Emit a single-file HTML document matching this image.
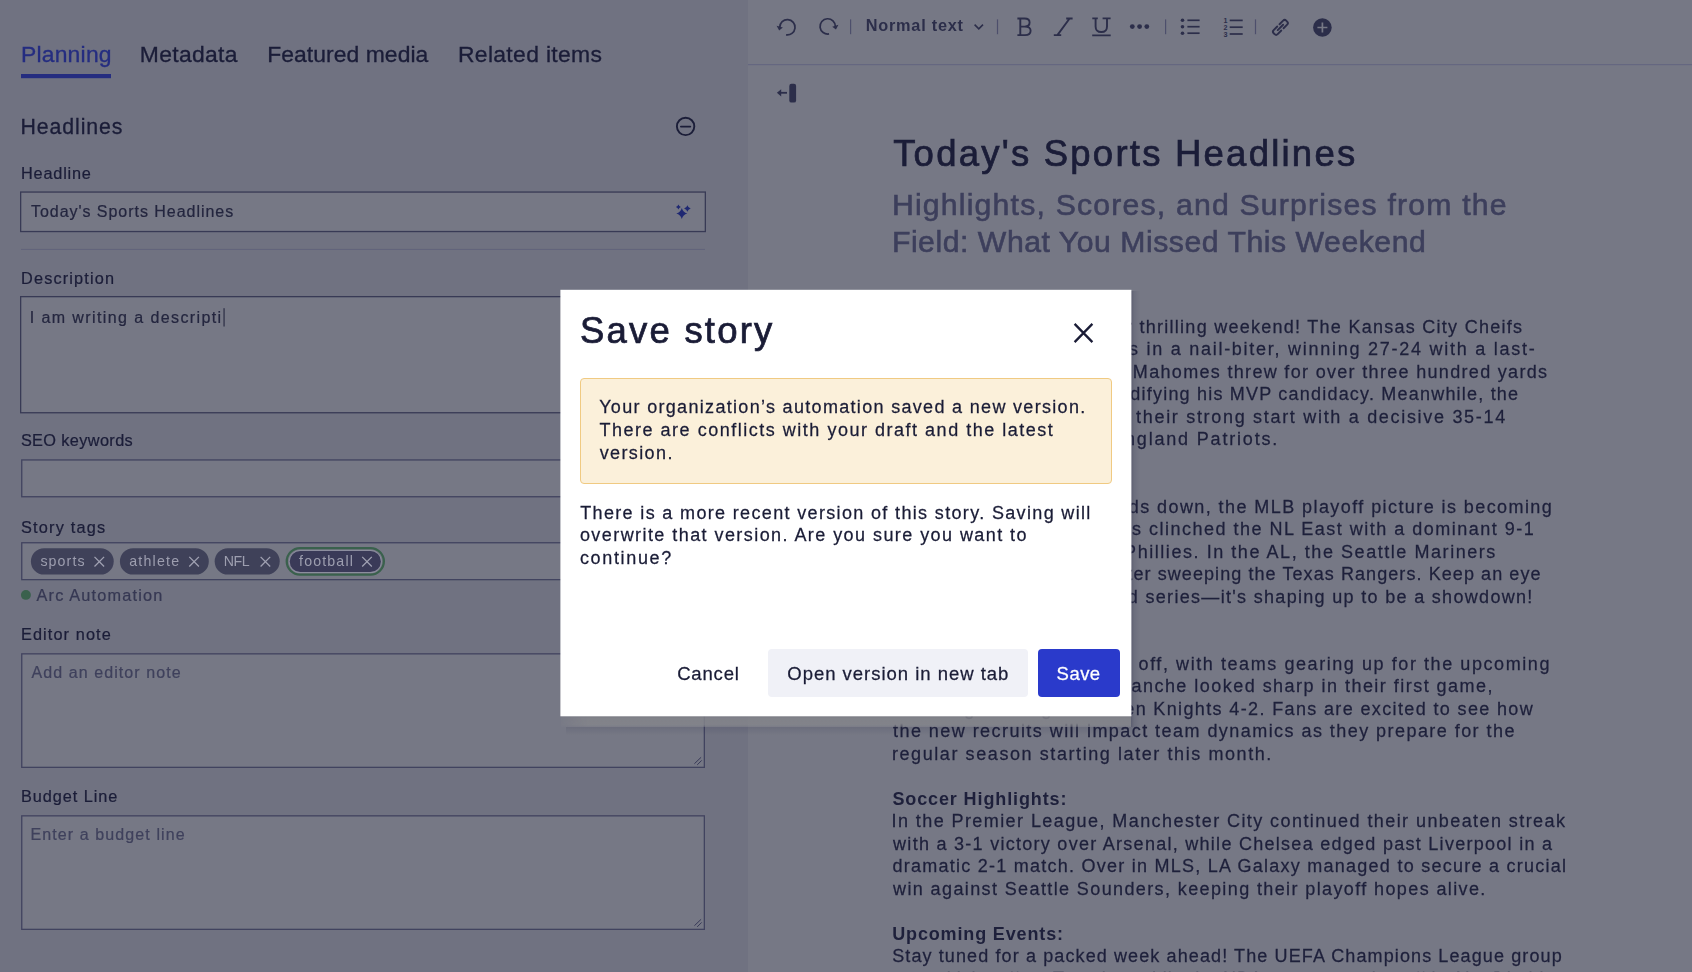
<!DOCTYPE html>
<html lang="en">
<head>
<meta charset="utf-8">
<title>Save story</title>
<style>
html,body{margin:0;padding:0;}
body{width:1692px;height:972px;overflow:hidden;position:relative;background:#767885;font-family:"Liberation Sans",sans-serif;}
#left{position:absolute;left:0;top:0;width:748px;height:972px;background:#707281;}
svg.g{position:absolute;left:0;top:0;width:1692px;height:972px;overflow:visible;}
.t{position:absolute;white-space:pre;}
.tl{position:absolute;left:0;top:0;width:1692px;height:972px;will-change:transform;}
#mshadow{position:absolute;left:561px;top:716px;width:570px;height:11px;background:linear-gradient(180deg,rgba(122,123,131,.86),rgba(132,133,139,.84) 25%,rgba(132,133,139,.82) 80%,rgba(128,129,138,.45));-webkit-mask-image:linear-gradient(90deg,rgba(0,0,0,.25),#000 26px);mask-image:linear-gradient(90deg,rgba(0,0,0,.25),#000 26px);}
#mbelow{position:absolute;left:566px;top:727px;width:572px;height:8px;background:linear-gradient(180deg,rgba(40,42,72,.13),rgba(40,42,72,0));}
#mside{position:absolute;left:1131px;top:291px;width:9px;height:436px;background:linear-gradient(90deg,rgba(40,42,72,.32),rgba(40,42,72,.12) 35%,rgba(40,42,72,0));}
#alert{position:absolute;left:580px;top:377.7px;width:530px;height:104.6px;border:1px solid #f0ca82;border-radius:4px;background:#fbf0da;}
#bopen{position:absolute;left:768.3px;top:649.3px;width:259.7px;height:47.7px;border-radius:4px;background:#f0f1f7;}
#bsave{position:absolute;left:1037.7px;top:649.3px;width:82.6px;height:47.7px;border-radius:4px;background:#2a3acb;}
</style>
</head>
<body>
<aside id="left" aria-label="Story settings"></aside>
<svg class="g" viewBox="0 0 1692 972">
<rect x="21" y="74" width="90" height="4.2" fill="#252d80"/>
<circle cx="685.6" cy="126.4" r="8.7" fill="none" stroke="#1b1d38" stroke-width="1.9"/>
<path d="M680.9 126.55H690.3" stroke="#1b1d38" stroke-width="1.8" stroke-linecap="round"/>
<rect x="20.65" y="192.05" width="684.70" height="39.50" rx="0" fill="#767885" stroke="#383a55" stroke-width="1.3"/>
<rect x="20.65" y="296.65" width="684.70" height="116.10" rx="0" fill="#767885" stroke="#383a55" stroke-width="1.3"/>
<rect x="21.75" y="459.95" width="682.60" height="36.80" rx="0" fill="#767885" stroke="#41435f" stroke-width="1.3"/>
<rect x="21.75" y="542.75" width="682.60" height="36.90" rx="0" fill="#767885" stroke="#41435f" stroke-width="1.3"/>
<rect x="21.75" y="653.85" width="682.60" height="113.50" rx="0" fill="#767885" stroke="#41435f" stroke-width="1.3"/>
<rect x="21.75" y="815.85" width="682.60" height="113.50" rx="0" fill="#767885" stroke="#41435f" stroke-width="1.3"/>
<rect x="21" y="248.9" width="684" height="1.1" fill="#62647b"/>
<path d="M681.80 208.10 Q683.01 212.39 687.30 213.60 Q683.01 214.81 681.80 219.10 Q680.59 214.81 676.30 213.60 Q680.59 212.39 681.80 208.10Z" fill="#1f2872"/>
<path d="M678.40 204.50 Q678.95 206.45 680.90 207.00 Q678.95 207.55 678.40 209.50 Q677.85 207.55 675.90 207.00 Q677.85 206.45 678.40 204.50Z" fill="#1f2872"/>
<path d="M687.40 205.20 Q688.13 207.77 690.70 208.50 Q688.13 209.23 687.40 211.80 Q686.67 209.23 684.10 208.50 Q686.67 207.77 687.40 205.20Z" fill="#1f2872"/>
<rect x="223.5" y="308.2" width="1.1" height="18.3" fill="#24263f"/>
<rect x="30.9" y="548.2" width="82.8" height="26.4" rx="13.2" fill="#3f4159"/>
<path d="M94.5 556.9L104.1 566.5M104.1 556.9L94.5 566.5" stroke="#a0a1b2" stroke-width="1.3" fill="none"/>
<rect x="119.9" y="548.2" width="88.9" height="26.4" rx="13.2" fill="#3f4159"/>
<path d="M189.3 556.9L198.9 566.5M198.9 556.9L189.3 566.5" stroke="#a0a1b2" stroke-width="1.3" fill="none"/>
<rect x="214.7" y="548.2" width="65.0" height="26.4" rx="13.2" fill="#3f4159"/>
<path d="M260.6 556.9L270.20000000000005 566.5M270.20000000000005 556.9L260.6 566.5" stroke="#a0a1b2" stroke-width="1.3" fill="none"/>
<rect x="286.75" y="548.05" width="97.10" height="26.60" rx="13.3" fill="none" stroke="#3a614d" stroke-width="2.3"/>
<rect x="288.8" y="550.1" width="93.0" height="22.9" rx="11.45" fill="#8c8d9e"/>
<rect x="289.7" y="551.0" width="91.2" height="21.1" rx="10.55" fill="#3a3a58"/>
<path d="M362.2 556.9L371.8 566.5M371.8 556.9L362.2 566.5" stroke="#a0a1b2" stroke-width="1.3" fill="none"/>
<circle cx="25.9" cy="594.9" r="4.95" fill="#3a614d"/>
<path d="M694.4 763.7L701.1 757.3M697.2 764.9L701.7 760.4" stroke="#363857" stroke-width="1" fill="none"/>
<path d="M694.4 925.7L701.1 919.3M697.2 926.9L701.7 922.4" stroke="#363857" stroke-width="1" fill="none"/>
<rect x="748" y="64" width="944" height="1.2" fill="#656780"/>
<path d="M779.75 27.30 A7.65 7.65 0 1 1 786.07 34.83" fill="none" stroke="#2c2e4a" stroke-width="1.7"/><path d="M776.65 25.70 L782.85 27.60 L779.15 30.50Z" fill="#2c2e4a"/>
<path d="M835.35 26.40 A7.65 7.65 0 1 0 829.03 33.93" fill="none" stroke="#2c2e4a" stroke-width="1.7"/><path d="M838.45 24.80 L832.25 26.70 L835.95 29.60Z" fill="#2c2e4a"/>
<rect x="850.0" y="19.4" width="1.2" height="14.8" fill="#4d4f6c"/>
<rect x="996.9" y="19.4" width="1.2" height="14.8" fill="#4d4f6c"/>
<rect x="1165.0" y="19.4" width="1.2" height="14.8" fill="#4d4f6c"/>
<rect x="1254.9" y="19.4" width="1.2" height="14.8" fill="#4d4f6c"/>
<path d="M974.6 24.6L978.8 28.8L983 24.6" fill="none" stroke="#2c2e4a" stroke-width="1.6"/>
<path d="M1017.4 18.5H1024.6C1028 18.5 1029.6 20.3 1029.6 22.6C1029.6 24.9 1028 26.6 1024.8 26.6H1020.3M1020.3 18.5V35.1M1024.8 26.6C1028.6 26.6 1030.6 28.3 1030.6 30.8C1030.6 33.4 1028.6 35.1 1025 35.1H1017.4" fill="none" stroke="#2c2e4a" stroke-width="1.9"/>
<path d="M1066.2 18.5H1072.6M1053.8 35.1H1061.2M1069.6 18.5L1057.4 35.1" fill="none" stroke="#2c2e4a" stroke-width="1.9"/>
<path d="M1092.3 18.4H1097.8M1102.6 18.4H1110.6M1095.6 18.4V26.4C1095.6 30 1097.8 32 1101.3 32C1104.8 32 1107 30 1107 26.4V18.4M1092.2 35.4H1110.7" fill="none" stroke="#2c2e4a" stroke-width="1.9"/>
<circle cx="1132.3" cy="26.6" r="2.4" fill="#2c2e4a"/>
<circle cx="1139.6" cy="26.6" r="2.4" fill="#2c2e4a"/>
<circle cx="1146.8" cy="26.6" r="2.4" fill="#2c2e4a"/>
<circle cx="1182.5" cy="20.3" r="1.8" fill="#2c2e4a"/>
<path d="M1187.4 20.3H1199.6" stroke="#2c2e4a" stroke-width="1.7"/>
<circle cx="1182.5" cy="26.7" r="1.8" fill="#2c2e4a"/>
<path d="M1187.4 26.7H1199.6" stroke="#2c2e4a" stroke-width="1.7"/>
<circle cx="1182.5" cy="33.2" r="1.8" fill="#2c2e4a"/>
<path d="M1187.4 33.2H1199.6" stroke="#2c2e4a" stroke-width="1.7"/>
<path d="M1229.7 20.4H1242.7" stroke="#2c2e4a" stroke-width="1.7"/>
<text x="1223.6" y="23.0" font-family="Liberation Sans,sans-serif" font-weight="700" font-size="7.2" fill="#2c2e4a">1</text>
<path d="M1229.7 27.2H1242.7" stroke="#2c2e4a" stroke-width="1.7"/>
<text x="1223.6" y="29.8" font-family="Liberation Sans,sans-serif" font-weight="700" font-size="7.2" fill="#2c2e4a">2</text>
<path d="M1229.7 34.0H1242.7" stroke="#2c2e4a" stroke-width="1.7"/>
<text x="1223.6" y="36.6" font-family="Liberation Sans,sans-serif" font-weight="700" font-size="7.2" fill="#2c2e4a">3</text>
<g transform="translate(1280.4 27.4) rotate(-45)" fill="none" stroke="#2c2e4a" stroke-width="1.9" stroke-linecap="round"><path d="M-1.6 -2.85H-6.7A2.2 2.2 0 0 0 -8.9 -0.65V0.65A2.2 2.2 0 0 0 -6.7 2.85H-1.6"/><path d="M1.6 -2.85H6.7A2.2 2.2 0 0 1 8.9 -0.65V0.65A2.2 2.2 0 0 1 6.7 2.85H1.6"/><path d="M-3.8 0H3.8"/></g>
<circle cx="1322.4" cy="27.5" r="9.3" fill="#2c2e4a"/>
<path d="M1317.4 27.5H1327.4M1322.4 22.5V32.5" stroke="#767885" stroke-width="1.7"/>
<rect x="789.3" y="83.8" width="6.8" height="18.8" rx="2.2" fill="#2c2e4a"/>
<path d="M776.9 92.8L781.2 89.2V96.4Z" fill="#2c2e4a"/><path d="M780.8 92.8H787" stroke="#2c2e4a" stroke-width="1.8"/>
</svg>
<main class="tl"><span class="t" style="left:20.91px;top:39.00px;font-size:22.9px;line-height:30px;letter-spacing:0.223px;color:#252d80;-webkit-text-stroke:0.014em;">Planning</span>
<span class="t" style="left:139.74px;top:39.00px;font-size:22.9px;line-height:30px;letter-spacing:0.333px;color:#1b1d38;-webkit-text-stroke:0.014em;">Metadata</span>
<span class="t" style="left:267.16px;top:39.00px;font-size:22.9px;line-height:30px;letter-spacing:0.063px;color:#1b1d38;-webkit-text-stroke:0.014em;">Featured media</span>
<span class="t" style="left:457.95px;top:39.00px;font-size:22.9px;line-height:30px;letter-spacing:0.338px;color:#1b1d38;-webkit-text-stroke:0.014em;">Related items</span>
<span class="t" style="left:20.56px;top:113.01px;font-size:21.3px;line-height:28px;letter-spacing:0.898px;color:#1b1d38;-webkit-text-stroke:0.014em;">Headlines</span>
<span class="t" style="left:21.02px;top:163.00px;font-size:16.3px;line-height:21px;letter-spacing:0.798px;color:#1b1d38;-webkit-text-stroke:0.014em;">Headline</span>
<span class="t" style="left:30.98px;top:201.01px;font-size:16.0px;line-height:21px;letter-spacing:0.963px;color:#24263f;-webkit-text-stroke:0.014em;">Today's Sports Headlines</span>
<span class="t" style="left:21.02px;top:268.01px;font-size:16.3px;line-height:21px;letter-spacing:1.149px;color:#1b1d38;-webkit-text-stroke:0.014em;">Description</span>
<span class="t" style="left:29.80px;top:307.01px;font-size:16.0px;line-height:21px;letter-spacing:1.400px;color:#24263f;-webkit-text-stroke:0.014em;">I am writing a descripti</span>
<span class="t" style="left:20.89px;top:430.00px;font-size:16.3px;line-height:21px;letter-spacing:0.380px;color:#1b1d38;-webkit-text-stroke:0.014em;">SEO keywords</span>
<span class="t" style="left:20.90px;top:517.00px;font-size:16.3px;line-height:21px;letter-spacing:1.219px;color:#1b1d38;-webkit-text-stroke:0.014em;">Story tags</span>
<span class="t" style="left:40.40px;top:552.00px;font-size:14.2px;line-height:18px;letter-spacing:1.107px;color:#9d9eaf;">sports</span>
<span class="t" style="left:129.19px;top:552.00px;font-size:14.2px;line-height:18px;letter-spacing:1.228px;color:#9d9eaf;">athlete</span>
<span class="t" style="left:223.79px;top:552.00px;font-size:14.2px;line-height:18px;letter-spacing:-0.491px;color:#9d9eaf;">NFL</span>
<span class="t" style="left:299.12px;top:552.00px;font-size:14.2px;line-height:18px;letter-spacing:1.139px;color:#9d9eaf;">football</span>
<span class="t" style="left:36.51px;top:585.00px;font-size:16.3px;line-height:21px;letter-spacing:1.190px;color:#363853;-webkit-text-stroke:0.014em;">Arc Automation</span>
<span class="t" style="left:21.01px;top:624.01px;font-size:16.3px;line-height:21px;letter-spacing:1.099px;color:#1b1d38;-webkit-text-stroke:0.014em;">Editor note</span>
<span class="t" style="left:31.51px;top:662.01px;font-size:16.0px;line-height:21px;letter-spacing:1.081px;color:#3f415c;-webkit-text-stroke:0.014em;">Add an editor note</span>
<span class="t" style="left:21.04px;top:786.01px;font-size:16.3px;line-height:21px;letter-spacing:0.939px;color:#1b1d38;-webkit-text-stroke:0.014em;">Budget Line</span>
<span class="t" style="left:30.42px;top:824.01px;font-size:16.0px;line-height:21px;letter-spacing:1.106px;color:#3f415c;-webkit-text-stroke:0.014em;">Enter a budget line</span>
<span class="t" style="left:865.77px;top:15.01px;font-size:16.3px;line-height:21px;letter-spacing:0.763px;color:#2c2e4a;font-weight:700;">Normal text</span>
<span class="t" style="left:893.13px;top:130.01px;font-size:36.5px;line-height:47px;letter-spacing:2.232px;color:#1b1d38;-webkit-text-stroke:0.02em;">Today's Sports Headlines</span>
<span class="t" style="left:891.93px;top:185.01px;font-size:30.2px;line-height:39px;letter-spacing:1.200px;color:#3d3f5c;-webkit-text-stroke:0.02em;">Highlights, Scores, and Surprises from the</span>
<span class="t" style="left:891.92px;top:222.00px;font-size:30.2px;line-height:39px;letter-spacing:0.535px;color:#3d3f5c;-webkit-text-stroke:0.02em;">Field: What You Missed This Weekend</span>
<span class="t" style="left:892.10px;top:293.00px;font-size:18px;line-height:23px;letter-spacing:0.900px;color:#1e203b;font-weight:700;">Football Roundup:</span>
<span class="t" style="left:888.12px;top:316.01px;font-size:18px;line-height:23px;letter-spacing:1.267px;color:#1e203b;-webkit-text-stroke:0.014em;">The NFL delivered another thrilling weekend! The Kansas City Cheifs</span>
<span class="t" style="left:883.93px;top:338.01px;font-size:18px;line-height:23px;letter-spacing:1.739px;color:#1e203b;-webkit-text-stroke:0.014em;">edged out the Buffalo Bills in a nail-biter, winning 27-24 with a last-</span>
<span class="t" style="left:892.18px;top:361.00px;font-size:18px;line-height:23px;letter-spacing:1.318px;color:#1e203b;-webkit-text-stroke:0.014em;">second field goal. Patrick Mahomes threw for over three hundred yards</span>
<span class="t" style="left:900.33px;top:383.01px;font-size:18px;line-height:23px;letter-spacing:1.205px;color:#1e203b;-webkit-text-stroke:0.014em;">and two touchdowns, solidifying his MVP candidacy. Meanwhile, the</span>
<span class="t" style="left:839.07px;top:406.01px;font-size:18px;line-height:23px;letter-spacing:1.693px;color:#1e203b;-webkit-text-stroke:0.014em;">Philadelphia Eagles continued their strong start with a decisive 35-14</span>
<span class="t" style="left:905.12px;top:428.01px;font-size:18px;line-height:23px;letter-spacing:1.811px;color:#1e203b;-webkit-text-stroke:0.014em;">victory over the New England Patriots.</span>
<span class="t" style="left:892.10px;top:473.01px;font-size:18px;line-height:23px;letter-spacing:0.900px;color:#1e203b;font-weight:700;">Baseball Update:</span>
<span class="t" style="left:886.09px;top:496.01px;font-size:18px;line-height:23px;letter-spacing:1.423px;color:#1e203b;-webkit-text-stroke:0.014em;">As the regular season winds down, the MLB playoff picture is becoming</span>
<span class="t" style="left:886.28px;top:518.00px;font-size:18px;line-height:23px;letter-spacing:1.496px;color:#1e203b;-webkit-text-stroke:0.014em;">clearer. The Atlanta Braves clinched the NL East with a dominant 9-1</span>
<span class="t" style="left:878.58px;top:541.00px;font-size:18px;line-height:23px;letter-spacing:1.553px;color:#1e203b;-webkit-text-stroke:0.014em;">win over the Philadelphia Phillies. In the AL, the Seattle Mariners</span>
<span class="t" style="left:884.18px;top:563.01px;font-size:18px;line-height:23px;letter-spacing:1.077px;color:#1e203b;-webkit-text-stroke:0.014em;">secured a wild card spot after sweeping the Texas Rangers. Keep an eye</span>
<span class="t" style="left:897.14px;top:586.01px;font-size:18px;line-height:23px;letter-spacing:1.315px;color:#1e203b;-webkit-text-stroke:0.014em;">on the upcoming wild card series—it's shaping up to be a showdown!</span>
<span class="t" style="left:892.10px;top:630.01px;font-size:18px;line-height:23px;letter-spacing:0.900px;color:#1e203b;font-weight:700;">Hockey Preseason:</span>
<span class="t" style="left:877.83px;top:653.01px;font-size:18px;line-height:23px;letter-spacing:1.571px;color:#1e203b;-webkit-text-stroke:0.014em;">The NHL preseason kicked off, with teams gearing up for the upcoming</span>
<span class="t" style="left:879.19px;top:675.01px;font-size:18px;line-height:23px;letter-spacing:1.471px;color:#1e203b;-webkit-text-stroke:0.014em;">season. The Colorado Avalanche looked sharp in their first game,</span>
<span class="t" style="left:889.36px;top:698.00px;font-size:18px;line-height:23px;letter-spacing:1.364px;color:#1e203b;-webkit-text-stroke:0.014em;">defeating the Vegas Golden Knights 4-2. Fans are excited to see how</span>
<span class="t" style="left:893.04px;top:720.01px;font-size:18px;line-height:23px;letter-spacing:1.449px;color:#1e203b;-webkit-text-stroke:0.014em;">the new recruits will impact team dynamics as they prepare for the</span>
<span class="t" style="left:891.93px;top:743.01px;font-size:18px;line-height:23px;letter-spacing:1.582px;color:#1e203b;-webkit-text-stroke:0.014em;">regular season starting later this month.</span>
<span class="t" style="left:892.42px;top:788.01px;font-size:18px;line-height:23px;letter-spacing:0.882px;color:#1e203b;font-weight:700;">Soccer Highlights:</span>
<span class="t" style="left:891.51px;top:810.01px;font-size:18px;line-height:23px;letter-spacing:1.422px;color:#1e203b;-webkit-text-stroke:0.014em;">In the Premier League, Manchester City continued their unbeaten streak</span>
<span class="t" style="left:893.08px;top:833.01px;font-size:18px;line-height:23px;letter-spacing:1.276px;color:#1e203b;-webkit-text-stroke:0.014em;">with a 3-1 victory over Arsenal, while Chelsea edged past Liverpool in a</span>
<span class="t" style="left:892.40px;top:855.00px;font-size:18px;line-height:23px;letter-spacing:1.251px;color:#1e203b;-webkit-text-stroke:0.014em;">dramatic 2-1 match. Over in MLS, LA Galaxy managed to secure a crucial</span>
<span class="t" style="left:893.06px;top:878.01px;font-size:18px;line-height:23px;letter-spacing:1.386px;color:#1e203b;-webkit-text-stroke:0.014em;">win against Seattle Sounders, keeping their playoff hopes alive.</span>
<span class="t" style="left:892.22px;top:923.00px;font-size:18px;line-height:23px;letter-spacing:0.850px;color:#1e203b;font-weight:700;">Upcoming Events:</span>
<span class="t" style="left:892.15px;top:945.00px;font-size:18px;line-height:23px;letter-spacing:1.114px;color:#1e203b;-webkit-text-stroke:0.014em;">Stay tuned for a packed week ahead! The UEFA Champions League group</span>
<span class="t" style="left:892.38px;top:968.01px;font-size:18px;line-height:23px;letter-spacing:0.900px;color:#1e203b;-webkit-text-stroke:0.014em;">stage kicks off on Tuesday, while the NBA preseason tips off in Abu Dhabi.</span></main>
<div role="dialog" aria-modal="true" aria-label="Save story">
<div id="mshadow"></div>
<div id="mside"></div>
<div id="mbelow"></div>
<svg class="g" viewBox="0 0 1692 972"><rect x="560.4" y="289.8" width="571" height="426.5" fill="#fff"/></svg>
<div id="alert"></div>
<div id="bopen"></div>
<div id="bsave"></div>
<svg class="g" viewBox="0 0 1692 972">
<path d="M1074.6 323.9 L1092.4 342.1 M1092.4 323.9 L1074.6 342.1" stroke="#1a1c36" stroke-width="2.3" fill="none"/>
</svg>
<div class="tl"><span class="t" style="left:580.06px;top:307.01px;font-size:36.5px;line-height:47px;letter-spacing:2.207px;color:#1a1c36;-webkit-text-stroke:0.02em;">Save story</span>
<span class="t" style="left:599.20px;top:396.01px;font-size:18px;line-height:23px;letter-spacing:1.316px;color:#1a1c36;-webkit-text-stroke:0.014em;">Your organization’s automation saved a new version.</span>
<span class="t" style="left:599.49px;top:419.01px;font-size:18px;line-height:23px;letter-spacing:1.514px;color:#1a1c36;-webkit-text-stroke:0.014em;">There are conflicts with your draft and the latest</span>
<span class="t" style="left:599.68px;top:442.00px;font-size:18px;line-height:23px;letter-spacing:1.384px;color:#1a1c36;-webkit-text-stroke:0.014em;">version.</span>
<span class="t" style="left:580.23px;top:502.00px;font-size:18px;line-height:23px;letter-spacing:1.345px;color:#1a1c36;-webkit-text-stroke:0.014em;">There is a more recent version of this story. Saving will</span>
<span class="t" style="left:579.89px;top:524.00px;font-size:18px;line-height:23px;letter-spacing:1.436px;color:#1a1c36;-webkit-text-stroke:0.014em;">overwrite that version. Are you sure you want to</span>
<span class="t" style="left:579.93px;top:547.01px;font-size:18px;line-height:23px;letter-spacing:1.656px;color:#1a1c36;-webkit-text-stroke:0.014em;">continue?</span>
<span class="t" style="left:677.13px;top:662.01px;font-size:18.5px;line-height:24px;letter-spacing:0.835px;color:#1a1c36;-webkit-text-stroke:0.014em;">Cancel</span>
<span class="t" style="left:787.34px;top:662.01px;font-size:18.5px;line-height:24px;letter-spacing:0.979px;color:#1a1c36;-webkit-text-stroke:0.014em;">Open version in new tab</span>
<span class="t" style="left:1056.59px;top:662.01px;font-size:18.5px;line-height:24px;letter-spacing:0.466px;color:#ffffff;-webkit-text-stroke:0.014em;">Save</span></div>
</div>
</body>
</html>
